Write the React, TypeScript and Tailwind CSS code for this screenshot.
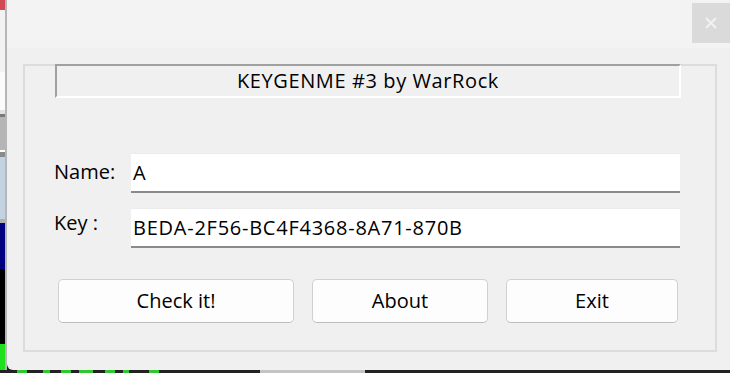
import React from "react";

const strip = [
  { h: "h-[10px]", c: "bg-[#cf4a55]" },
  { h: "h-[62px]", c: "bg-[#f2f2f2]" },
  { h: "h-[38px]", c: "bg-[#fbfbfb]" },
  { h: "h-[4px]", c: "bg-[#e2e2e2]" },
  { h: "h-[3px]", c: "bg-[#7a7a7a]" },
  { h: "h-[33px]", c: "bg-[#b5b5b5]" },
  { h: "h-[2px]", c: "bg-[#ffffff]" },
  { h: "h-[5px]", c: "bg-[#8a8a8a]" },
  { h: "h-[62px]", c: "bg-[#c3d2e1]" },
  { h: "h-[4px]", c: "bg-[#b0b0b0]" },
  { h: "h-[46px]", c: "bg-[#000080]" },
  { h: "h-[75px]", c: "bg-[#000000]" },
  { h: "h-[26px]", c: "bg-[#1ee01e]" },
];

const font = { fontFamily: '"Segoe UI", "Open Sans", sans-serif' };

const Field = ({ label, value, top }: { label: string; value: string; top: string }) => (
  <div className="flex items-center">
    <span className={`w-[77px] text-[20px] text-black ${top}`}>{label}</span>
    <div className="w-[549px] h-[40px] bg-white border-t border-[#ececec] border-b-2 border-b-[#8a8a8a] flex items-center pl-[2px] text-[20px] tracking-[0.75px] text-black">
      {value}
    </div>
  </div>
);

const Btn = ({ text, w }: { text: string; w: string }) => (
  <button
    className={`${w} h-[44px] rounded-[5px] bg-[#fdfdfd] border border-[#d0d0d0] border-b-[#bdbdbd] text-[20px] text-black flex items-center justify-center`}
  >
    {text}
  </button>
);

export default function App() {
  return (
    <div className="w-[730px] h-[373px] flex flex-col bg-[#1c1c1c] overflow-hidden" style={font}>
      <div className="flex h-[370px]">
        <div className="w-[5px] flex flex-col">
          {strip.map((s, i) => (
            <div key={i} className={`${s.h} ${s.c}`} />
          ))}
        </div>
        <div className="w-[2px] bg-[#b6b6b6]" />
        <div className="flex-1 flex flex-col rounded-bl-[6px] overflow-hidden bg-[#f0f0f0]">
          <div className="h-[48px] bg-[#f3f3f3] flex justify-end items-start">
            <div className="mt-[3px] w-[38px] h-[40px] bg-[#dadada] flex items-center justify-center">
              <svg width="12" height="12" viewBox="0 0 12 12">
                <path d="M1 1 L11 11 M11 1 L1 11" stroke="#f2f2f2" strokeWidth="2" />
              </svg>
            </div>
          </div>
          <div className="flex-1 pl-[16px] pr-[13px] pt-[16px] pb-[18px] flex">
            <div className="flex-1 border-2 border-[#dcdcdc] flex flex-col">
              <div className="-mt-[2px] ml-[30px] w-[626px] h-[34px] border-2 border-t-[#a0a0a0] border-l-[#a0a0a0] border-b-white border-r-white flex items-center justify-center text-[20px] tracking-[0.6px] text-black">
                KEYGENME #3 by WarRock
              </div>
              <div className="ml-[29px] mt-[55px] flex flex-col gap-[15px]">
                <Field label="Name:" value="A" top="-mt-[2px]" />
                <Field label="Key :" value="BEDA-2F56-BC4F4368-8A71-870B" top="-mt-[10px]" />
              </div>
              <div className="ml-[33px] mt-[31px] flex gap-[18px]">
                <Btn text="Check it!" w="w-[236px]" />
                <Btn text="About" w="w-[176px]" />
                <Btn text="Exit" w="w-[172px]" />
              </div>
            </div>
          </div>
        </div>
      </div>
      <div className="h-[3px] flex">
        <div className="w-[17px] bg-[#222]" />
        <div className="w-[10px] bg-[#2fc82f]" />
        <div className="w-[16px] bg-[#222]" />
        <div className="w-[7px] bg-[#2fc82f]" />
        <div className="w-[11px] bg-[#222]" />
        <div className="w-[10px] bg-[#2fc82f]" />
        <div className="w-[8px] bg-[#222]" />
        <div className="w-[14px] bg-[#2fc82f]" />
        <div className="w-[12px] bg-[#222]" />
        <div className="w-[10px] bg-[#2fc82f]" />
        <div className="w-[8px] bg-[#222]" />
        <div className="w-[6px] bg-[#2fc82f]" />
        <div className="w-[20px] bg-[#222]" />
        <div className="w-[10px] bg-[#2fc82f]" />
        <div className="w-[101px] bg-[#222]" />
        <div className="w-[105px] bg-[#c4c4c4]" />
        <div className="flex-1 bg-[#222]" />
      </div>
    </div>
  );
}
